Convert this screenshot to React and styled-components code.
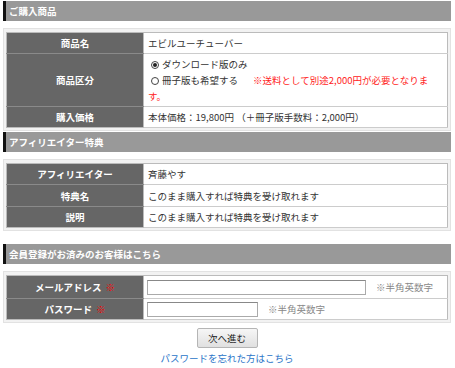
import React from "react";
import styled, { createGlobalStyle } from "styled-components";

const Global = createGlobalStyle`
  html, body { margin: 0; padding: 0; background: #fff; }
  body {
    font-family: "Noto Sans CJK JP", "Noto Sans", sans-serif;
    font-size: 9.5px;
    color: #333;
  }
`;

const Page = styled.div`
  padding: 1px 4px 0 3px;
  width: 448px;
`;

const SectionHeader = styled.div`
  height: 20px;
  line-height: 20px;
  background: #999;
  border-left: 3px solid #111;
  color: #fff;
  font-weight: bold;
  padding-left: 3px;
  margin-top: ${(p) => p.$top || 0}px;
`;

const Frame = styled.div`
  margin-top: 7px;
  background: #f2f2f2;
  border: 1px solid #e2e2e2;
  padding: 3px 2px 2px 2px;
`;

const Table = styled.table`
  width: 100%;
  border-collapse: collapse;
  border: 1px solid #bbb;
  background: #fff;
`;

const Row = styled.tr`
  height: ${(p) => p.$h || 21}px;
`;

const Label = styled.th`
  width: 136px;
  background: #666;
  color: #fff;
  font-weight: bold;
  text-align: center;
  padding: 0;
  border-bottom: 1px solid #8a8a8a;
  border-right: 1px solid #bbb;
  ${Row}:last-child & { border-bottom: none; }
`;

const Cell = styled.td`
  padding: 2px 6px 2px 4px;
  line-height: 16px;
  border-bottom: 1px solid #ccc;
  text-align: left;
  vertical-align: middle;
`;

const Option = styled.div`
  padding-left: 3px;
`;

const Radio = styled.span`
  box-sizing: border-box;
  width: 8px;
  height: 8px;
  border-radius: 50%;
  border: 1px solid #444;
  margin-right: 3px;
  display: inline-block;
  vertical-align: -1px;
  position: relative;
  &::after {
    content: "";
    position: absolute;
    left: 1px;
    top: 1px;
    width: 4px;
    height: 4px;
    border-radius: 50%;
    background: ${(p) => (p.$checked ? "#222" : "transparent")};
  }
`;

const Note = styled.span`
  color: #f22;
`;

const InlineNote = styled(Note)`
  margin-left: 15px;
`;

const Required = styled.span`
  color: #f00;
  margin-left: 4px;
`;

const FieldRow = styled.div`
  display: flex;
  align-items: center;
`;

const Input = styled.input`
  box-sizing: border-box;
  width: ${(p) => p.$w}px;
  height: 15px;
  border: 1px solid #aaa;
  border-top-color: #888;
  margin: 0 0 0 -1px;
  padding: 0 2px;
  font: inherit;
`;

const Hint = styled.span`
  color: #888;
  margin-left: 10px;
`;

const Actions = styled.div`
  display: flex;
  flex-direction: column;
  align-items: center;
  margin-top: 5px;
`;

const Button = styled.button`
  width: 61px;
  height: 20px;
  padding: 0;
  font: inherit;
  color: #222;
  background: linear-gradient(#f6f6f6, #e0e0e0);
  border: 1px solid #b5b5b5;
  border-radius: 2px;
`;

const Link = styled.a`
  margin-top: 3px;
  color: #2a74c8;
  text-decoration: none;
  line-height: 14px;
`;

export default function App() {
  return (
    <>
      <Global />
      <Page>
        <SectionHeader>ご購入商品</SectionHeader>
        <Frame>
          <Table>
            <tbody>
              <Row $h={21}>
                <Label>商品名</Label>
                <Cell>エビルユーチューバー</Cell>
              </Row>
              <Row $h={52}>
                <Label>商品区分</Label>
                <Cell>
                  <Option>
                    <Radio $checked />
                    ダウンロード版のみ
                  </Option>
                  <Option>
                    <Radio />
                    冊子版も希望する
                    <InlineNote>※送料として別途2,000円が必要となりま</InlineNote>
                  </Option>
                  <Note>す。</Note>
                </Cell>
              </Row>
              <Row $h={21}>
                <Label>購入価格</Label>
                <Cell>本体価格：19,800円 （＋冊子版手数料：2,000円）</Cell>
              </Row>
            </tbody>
          </Table>
        </Frame>

        <SectionHeader $top={1}>アフィリエイター特典</SectionHeader>
        <Frame>
          <Table>
            <tbody>
              <Row $h={21}>
                <Label>アフィリエイター</Label>
                <Cell>斉藤やす</Cell>
              </Row>
              <Row $h={22}>
                <Label>特典名</Label>
                <Cell>このまま購入すれば特典を受け取れます</Cell>
              </Row>
              <Row $h={21}>
                <Label>説明</Label>
                <Cell>このまま購入すれば特典を受け取れます</Cell>
              </Row>
            </tbody>
          </Table>
        </Frame>

        <SectionHeader $top={13}>会員登録がお済みのお客様はこちら</SectionHeader>
        <Frame>
          <Table>
            <tbody>
              <Row $h={23}>
                <Label>
                  メールアドレス<Required>※</Required>
                </Label>
                <Cell>
                  <FieldRow>
                    <Input type="text" $w={219} />
                    <Hint>※半角英数字</Hint>
                  </FieldRow>
                </Cell>
              </Row>
              <Row $h={20}>
                <Label>
                  パスワード<Required>※</Required>
                </Label>
                <Cell>
                  <FieldRow>
                    <Input type="password" $w={111} />
                    <Hint>※半角英数字</Hint>
                  </FieldRow>
                </Cell>
              </Row>
            </tbody>
          </Table>
        </Frame>

        <Actions>
          <Button type="button">次へ進む</Button>
          <Link href="#">パスワードを忘れた方はこちら</Link>
        </Actions>
      </Page>
    </>
  );
}
